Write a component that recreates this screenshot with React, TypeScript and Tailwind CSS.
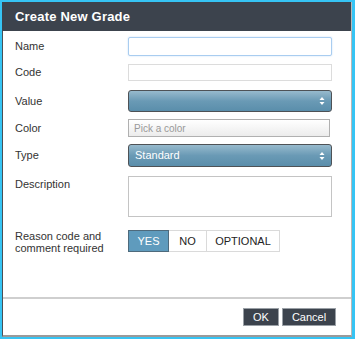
import React from 'react';

function SelectArrows() {
  return (
    <svg width="6" height="10" viewBox="0 0 6 10" className="shrink-0">
      <path d="M3 1 L5.5 4 H0.5 Z" fill="#ffffff" />
      <path d="M3 9 L5.5 6 H0.5 Z" fill="#ffffff" />
    </svg>
  );
}

export default function App() {
  const font = { fontFamily: '"Liberation Sans", Arial, sans-serif' };

  return (
    <div className="w-[355px] h-[339px] bg-[#36c4f4] pt-[2px] pl-[2px]" style={font}>
      <div className="w-[350px] h-[335px] bg-white flex flex-col border-l border-l-[#4b4f55] border-r border-r-[#b8b8b8] border-b-2 border-b-[#9a9a9a]">
        {/* Header */}
        <div className="h-[29px] bg-[#3c434d] flex items-center pl-[13px] -ml-px">
          <h1 className="text-white text-[13px] font-bold tracking-[0.2px]">Create New Grade</h1>
        </div>

        {/* Form */}
        <div className="pl-[12px] text-[11px] text-[#333]">
          {/* Name */}
          <div className="mt-[6px] h-[19px] flex items-center">
            <label className="w-[113px]">Name</label>
            <div className="w-[204px] h-[19px] border border-[#a9cdf0] rounded-[2px] shadow-[0_0_2px_#c5def7] bg-white" />
          </div>

          {/* Code */}
          <div className="mt-[8px] h-[17px] flex items-center">
            <label className="w-[113px]">Code</label>
            <div className="w-[204px] h-[17px] border border-[#dcdcdc] bg-white" />
          </div>

          {/* Value */}
          <div className="mt-[9px] h-[22px] flex items-center">
            <label className="w-[113px]">Value</label>
            <div className="w-[204px] h-[22px] rounded-[3px] border border-[#4e5256] bg-gradient-to-b from-[#97bacd] via-[#6a9ab5] to-[#5a8eab] flex items-center justify-end pr-[6px]">
              <SelectArrows />
            </div>
          </div>

          {/* Color */}
          <div className="mt-[7px] h-[18px] flex items-center">
            <label className="w-[113px]">Color</label>
            <div className="w-[202px] h-[18px] border border-[#b0b0b0] bg-gradient-to-b from-white to-[#ececec] flex items-center pl-[5px] text-[10px] text-[#999]">
              Pick a color
            </div>
          </div>

          {/* Type */}
          <div className="mt-[7px] h-[23px] flex items-center">
            <label className="w-[113px]">Type</label>
            <div className="w-[204px] h-[23px] rounded-[3px] border border-[#4e5256] bg-gradient-to-b from-[#97bacd] via-[#6a9ab5] to-[#5a8eab] flex items-center justify-between pl-[6px] pr-[6px] text-white text-[11px]">
              <span>Standard</span>
              <SelectArrows />
            </div>
          </div>

          {/* Description */}
          <div className="mt-[9px] h-[41px] flex items-start">
            <label className="w-[113px] pt-0">Description</label>
            <div className="w-[204px] h-[41px] border border-[#c4c4c4] bg-white" />
          </div>

          {/* Reason */}
          <div className="mt-[13px] h-[22px] flex items-center">
            <label className="w-[113px] leading-[12px] pt-[1px]">
              Reason code and
              <br />
              comment required
            </label>
            <div className="flex h-[22px] border border-[#dadada] text-[11px]">
              <div className="w-[41px] bg-[#5f9bbd] border border-[#4e6a7c] -m-px mr-0 text-white flex items-center justify-center">YES</div>
              <div className="w-[38px] border-r border-[#dadada] flex items-center justify-center text-[#222]">NO</div>
              <div className="w-[72px] flex items-center justify-center text-[#222]">OPTIONAL</div>
            </div>
          </div>
        </div>

        {/* Footer */}
        <div className="mt-auto border-t-2 border-[#cfcfcf] h-[38px] flex items-start justify-end pt-[9px] pr-[15px] gap-[3px]">
          <button className="w-[36px] h-[18px] bg-[#3c434d] border border-[#9aa0a6] text-white text-[11px] leading-none">OK</button>
          <button className="w-[54px] h-[18px] bg-[#3c434d] border border-[#9aa0a6] text-white text-[11px] leading-none">Cancel</button>
        </div>
      </div>
    </div>
  );
}
